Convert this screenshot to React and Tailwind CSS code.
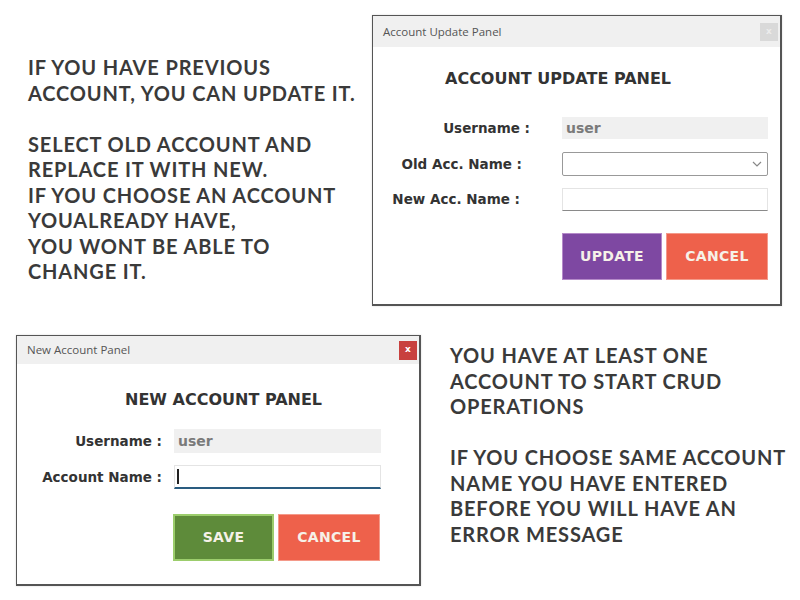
import React from "react";

const note = "font-['Lato',sans-serif] font-bold text-[20px] leading-[25.5px] tracking-[0.85px] text-[#3a3a3a]";
const ui = "font-['DejaVu_Sans',sans-serif]";

const WindowFrame = ({ title, closeRed, barH, className, children }) => (
  <div
    className={`flex flex-col bg-white border border-[#555] border-r-2 border-b-2 shadow-[0_0_2px_rgba(0,0,0,0.15)] ${className}`}
  >
    <div className={`flex items-center justify-between bg-[#f0f0f0] pl-[10px] pr-[2px] ${barH}`}>
      <span className="font-['Open_Sans',sans-serif] text-[11.5px] text-[#555]">
        {title}
      </span>
      {closeRed ? (
        <span className="w-[18px] h-[19px] bg-[#c8413f] flex items-center justify-center text-white text-[9px] font-bold font-['DejaVu_Sans',sans-serif]">
          x
        </span>
      ) : (
        <span className="w-[18px] h-[18px] bg-[#d9d9d9] flex items-center justify-center text-[#ececec] text-[9px] font-bold font-['DejaVu_Sans',sans-serif]">
          x
        </span>
      )}
    </div>
    {children}
  </div>
);

const Label = ({ children, className = "" }) => (
  <span className={`${ui} font-bold text-[13.5px] text-[#333] text-right ${className}`}>
    {children}
  </span>
);

const ReadOnly = ({ className = "" }) => (
  <div className={`bg-[#f0f0f0] flex items-center px-[4px] ${ui} font-bold text-[14px] text-[#7a7a7a] ${className}`}>
    user
  </div>
);

const Btn = ({ children, className }) => (
  <button className={`flex items-center justify-center ${ui} font-bold text-[14px] tracking-[0.3px] text-[#f6f1e8] ${className}`}>
    {children}
  </button>
);

export default function App() {
  return (
    <div className="w-[800px] h-[600px] bg-white flex flex-col overflow-hidden">
      {/* top row */}
      <div className="flex items-start">
        <div className={`${note} ml-[28px] mt-[55px]`}>
          <p>IF YOU HAVE PREVIOUS</p>
          <p>ACCOUNT, YOU CAN UPDATE IT.</p>
          <p>&nbsp;</p>
          <p>SELECT OLD ACCOUNT AND</p>
          <p>REPLACE IT WITH NEW.</p>
          <p>IF YOU CHOOSE AN ACCOUNT</p>
          <p>YOUALREADY HAVE,</p>
          <p>YOU WONT BE ABLE TO</p>
          <p>CHANGE IT.</p>
        </div>
        <WindowFrame
          title="Account Update Panel"
          barH="h-[31px]"
          className="ml-auto mr-[18px] mt-[15px] w-[410px] h-[291px]"
        >
          <div className="h-[1px]" />
          <div className={`${ui} font-bold text-[16px] text-[#333] ml-[72px] mt-[19px]`}>
            ACCOUNT UPDATE PANEL
          </div>
          <div className="grid grid-cols-[157px_206px] gap-x-[32px] mt-[26px] items-center">
            <Label>Username :</Label>
            <ReadOnly className="h-[22px]" />
            <Label className="pr-[8px] mt-[13px]">Old Acc. Name :</Label>
            <div className="h-[24px] mt-[13px] border border-[#999] rounded-[2px] flex items-center justify-end pr-[5px]">
              <svg width="10" height="6" viewBox="0 0 10 6" fill="none">
                <path d="M1 1l4 4 4-4" stroke="#888" strokeWidth="1.2" />
              </svg>
            </div>
            <Label className="pr-[10px] mt-[12px]">New Acc. Name :</Label>
            <div className="h-[23px] mt-[12px] border border-[#e4e4e4] border-b-[#8a8a8a] bg-white" />
          </div>
          <div className="flex gap-[4px] ml-[189px] mt-[22px]">
            <Btn className="w-[100px] h-[47px] bg-[#7e48a2] border border-[#b58ac9]">UPDATE</Btn>
            <Btn className="w-[102px] h-[47px] bg-[#ee614b] border border-[#f49a8a]">CANCEL</Btn>
          </div>
        </WindowFrame>
      </div>

      {/* bottom row */}
      <div className="flex items-start mt-[29px]">
        <WindowFrame
          title="New Account Panel"
          closeRed
          barH="h-[28px]"
          className="ml-[16px] w-[405px] h-[251px]"
        >
          <div className="h-[6px]" />
          <div className={`${ui} font-bold text-[16px] text-[#333] ml-[108px] mt-[18px]`}>
            NEW ACCOUNT PANEL
          </div>
          <div className="grid grid-cols-[145px_207px] gap-x-[12px] mt-[17px] items-center">
            <Label>Username :</Label>
            <ReadOnly className="h-[24px]" />
            <Label className="mt-[12px]">Account Name :</Label>
            <div className="h-[24px] mt-[12px] border border-[#e4e4e4] border-b-2 border-b-[#2a5c80] bg-white flex items-center pl-[2px]">
              <span className="w-[1.5px] h-[15px] bg-[#222]" />
            </div>
          </div>
          <div className="flex gap-[4px] ml-[156px] mt-[25px]">
            <Btn className="w-[101px] h-[47px] bg-[#5e8b3a] border-2 border-[#9ccd6c]">SAVE</Btn>
            <Btn className="w-[102px] h-[47px] bg-[#ee614b] border border-[#f49a8a]">CANCEL</Btn>
          </div>
        </WindowFrame>
        <div className={`${note} ml-[29px] mt-[8px]`}>
          <p>YOU HAVE AT LEAST ONE</p>
          <p>ACCOUNT TO START CRUD</p>
          <p>OPERATIONS</p>
          <p>&nbsp;</p>
          <p>IF YOU CHOOSE SAME ACCOUNT</p>
          <p>NAME YOU HAVE ENTERED</p>
          <p>BEFORE YOU WILL HAVE AN</p>
          <p>ERROR MESSAGE</p>
        </div>
      </div>
    </div>
  );
}
